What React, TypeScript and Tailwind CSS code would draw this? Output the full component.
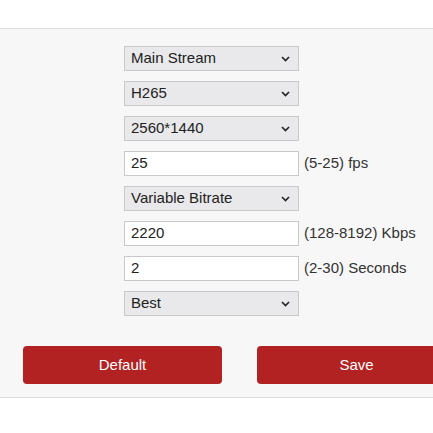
import React from "react";

const Chevron = () => (
  <svg width="9" height="6" viewBox="0 0 9 6" className="shrink-0">
    <path d="M1 1 L4.5 4.5 L8 1" fill="none" stroke="#222" strokeWidth="1.6" />
  </svg>
);

const Select = ({ value }: { value: string }) => (
  <div className="flex h-[25px] w-[175px] items-center justify-between border border-[#c9c9c9] bg-[#e9e9eb] pl-[6px] pr-[8px]">
    <span>{value}</span>
    <Chevron />
  </div>
);

const Input = ({ value }: { value: string }) => (
  <div className="flex h-[25px] w-[175px] items-center border border-[#c9c9c9] bg-white pl-[6px]">
    <span>{value}</span>
  </div>
);

export default function App() {
  const rows: { kind: "s" | "i"; value: string; hint?: string }[] = [
    { kind: "s", value: "Main Stream" },
    { kind: "s", value: "H265" },
    { kind: "s", value: "2560*1440" },
    { kind: "i", value: "25", hint: "(5-25) fps" },
    { kind: "s", value: "Variable Bitrate" },
    { kind: "i", value: "2220", hint: "(128-8192) Kbps" },
    { kind: "i", value: "2", hint: "(2-30) Seconds" },
    { kind: "s", value: "Best" },
  ];
  return (
    <div
      className="h-[433px] w-[433px] overflow-hidden bg-white text-[15px] text-[#222]"
      style={{ fontFamily: '"Liberation Sans", Arial, sans-serif' }}
    >
      <div className="h-[28px] bg-white" />
      <div className="w-[470px] border-y border-[#dcdcdc] bg-[#f7f7f7] pt-[17px] pb-[13px]">
        <div className="flex flex-col gap-[10px] pl-[124px]">
          {rows.map((r, i) => (
            <div key={i} className="flex items-center">
              {r.kind === "s" ? <Select value={r.value} /> : <Input value={r.value} />}
              {r.hint && <span className="ml-[5px] text-[#333]">{r.hint}</span>}
            </div>
          ))}
        </div>
        <div className="mt-[30px] flex gap-[35px] pl-[23px]">
          <button className="h-[38px] w-[199px] rounded-[4px] bg-[#b22222] text-white">Default</button>
          <button className="h-[38px] w-[199px] rounded-[4px] bg-[#b22222] text-white">Save</button>
        </div>
      </div>
    </div>
  );
}
